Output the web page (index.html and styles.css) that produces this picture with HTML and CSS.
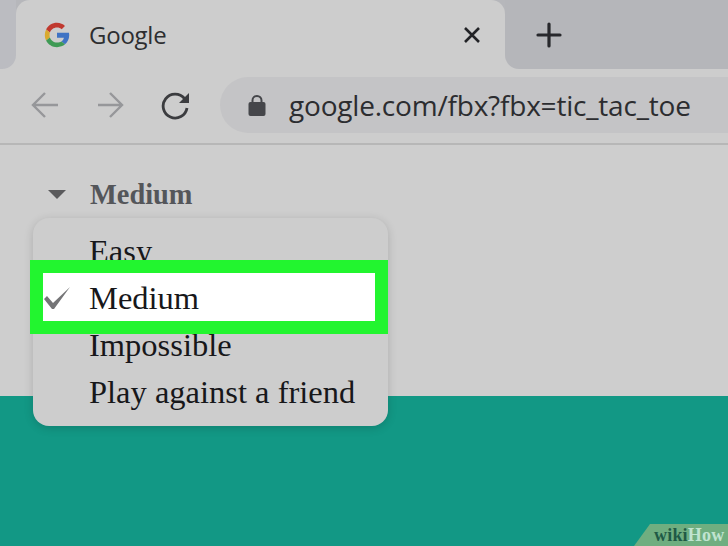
FILE: index.html
```html
<!DOCTYPE html>
<html lang="en">
<head>
<meta charset="utf-8">
<title>Google</title>
<link rel="stylesheet" href="styles.css">
</head>
<body>
<div class="page">
  <header class="chrome">
    <div class="tabstrip">
      <div class="tab-edge"></div>
      <div class="tab">
        <svg class="favicon" viewBox="0 0 48 48" width="26" height="26" aria-hidden="true">
          <path fill="#c0392f" d="M24 10c3.500 0 6.400 1.200 8.700 3.300l6-6C35 3.900 30 1.500 24 1.500 15.200 1.500 7.600 6.500 3.900 13.900l7 5.400C12.600 14 17.800 10 24 10z"/>
          <path fill="#3f73c4" d="M46.500 24.500c0-1.600-.1-3.100-.4-4.500H24v9h12.700c-.6 2.900-2.200 5.300-4.700 7l6.800 5.300c4.800-4.400 7.700-9.900 7.700-16.800z"/>
          <path fill="#d9aa2f" d="M10.900 28.700c-.4-1.400-.7-3-.7-4.700s.3-3.300.7-4.700l-7-5.400C2.400 16.900 1.500 20.300 1.500 24s.9 7.100 2.400 10.100l7-5.400z"/>
          <path fill="#3f9a55" d="M24 46.500c6 0 11.100-2 14.800-5.200L32 36c-2 1.300-4.600 2-8 2-6.200 0-11.400-4-13.100-9.300l-7 5.400C7.600 41.500 15.200 46.500 24 46.500z"/>
        </svg>
        <span class="tab-title">Google</span>
        <svg class="tab-close" viewBox="0 0 18 18" width="18" height="18" aria-hidden="true">
          <path d="M2 2l14 14M16 2L2 16" stroke="#222326" stroke-width="2.600" fill="none"/>
        </svg>
      </div>
      <div class="tab-rest">
        <svg class="new-tab" viewBox="0 0 26 26" width="26" height="26" aria-hidden="true">
          <path d="M2 13h22M13 2v22" stroke="#27282c" stroke-width="3.200" stroke-linecap="round" fill="none"/>
        </svg>
      </div>
    </div>
    <div class="toolbar">
      <svg class="nav-icon" viewBox="0 0 28 28" width="28" height="28" aria-hidden="true">
        <path d="M27 14H3M14 2L2 14l12 12" stroke="#96979a" stroke-width="2.400" fill="none"/>
      </svg>
      <svg class="nav-icon" viewBox="0 0 28 28" width="28" height="28" aria-hidden="true">
        <path d="M2 14h24M14 2l12 12-12 12" stroke="#96979a" stroke-width="2.400" fill="none"/>
      </svg>
      <svg class="nav-icon reload" viewBox="0 0 30 30" width="30" height="30" aria-hidden="true">
        <path d="M23.500 8.500A12 12 0 1 0 26 18" stroke="#3b3c3f" stroke-width="2.800" fill="none"/>
        <path d="M28 3v10H18z" fill="#3b3c3f"/>
      </svg>
      <div class="omnibox">
        <svg class="lock" viewBox="0 0 18 22" width="18" height="22" aria-hidden="true">
          <path d="M4.500 9V6.500a4.500 4.500 0 0 1 9 0V9" stroke="#45464a" stroke-width="2" fill="none"/>
          <rect x="0.500" y="8" width="17" height="14" rx="2" fill="#45464a"/>
        </svg>
        <span class="url">google.com/fbx?fbx=tic_tac_toe</span>
      </div>
    </div>
  </header>
  <main class="content">
    <div class="difficulty">
      <span class="caret"></span>
      <span class="difficulty-label">Medium</span>
    </div>
  </main>
  <div class="board"></div>

  <div class="menu">
    <div class="menu-item">Easy</div>
    <div class="menu-item selected">
      <svg class="check" viewBox="0 0 28 24" width="28" height="24" aria-hidden="true">
        <path d="M1 13l3-3 6 7L27 1 11 23H9z" fill="#757577"/>
      </svg>
      Medium
    </div>
    <div class="menu-item">Impossible</div>
    <div class="menu-item">Play against a friend</div>
  </div>

  <div class="watermark"><span class="wiki">wiki</span><span class="how">How</span></div>
</div>
</body>
</html>
```

FILE: styles.css
```css
* { box-sizing: border-box; }
html, body { margin: 0; padding: 0; }
body { width: 728px; height: 546px; overflow: hidden; font-family: "Open Sans", sans-serif; }

.page { position: relative; width: 728px; height: 546px; display: flex; flex-direction: column; background: #cecece; }

.chrome { flex: none; }

.tabstrip {
  height: 69px;
  display: flex;
  align-items: stretch;
  background: linear-gradient(#b6b7bb 0 50%, #cdcdcd 50% 100%);
}
.tab-edge { width: 16px; background: #bbbcc1; border-radius: 0 0 14px 0; }
.tab {
  width: 489px;
  display: flex;
  align-items: center;
  padding: 0 24px 0 28px;
  background: #cdcdcd;
  border-radius: 14px 14px 0 0;
}
.tab-rest {
  flex: 1;
  display: flex;
  align-items: center;
  padding-left: 31px;
  background: #b5b6ba;
  border-radius: 0 0 0 14px;
}
.favicon { flex: none; margin-top: 1px; }
.tab-title { margin-left: 19px; font-size: 24px; color: #2d2e30; letter-spacing: -0.25px; }
.tab-close { margin-left: auto; }

.toolbar { height: 76px; display: flex; align-items: center; background: #cdcdcd; border-bottom: 2px solid #b7b7b7; padding: 0 0 2px 31px; }
.nav-icon { flex: none; margin-right: 37px; }
.reload { margin: 0; }
.omnibox {
  flex: 1;
  height: 56px;
  margin-left: 29px;
  display: flex;
  align-items: center;
  padding-left: 28px;
  background: #c4c4c6;
  border-radius: 28px 0 0 28px;
}
.lock { flex: none; }
.url { margin-left: 23px; font-size: 28px; color: #2c2d30; letter-spacing: -0.2px; white-space: nowrap; }

.content { height: 251px; padding: 32px 0 0 48px; }
.difficulty { display: flex; align-items: center; }
.caret { width: 0; height: 0; border-left: 9px solid transparent; border-right: 9px solid transparent; border-top: 9px solid #5a5a5c; }
.difficulty-label { margin: 2px 0 0 24px; font-family: "Liberation Serif", serif; font-weight: 700; font-size: 28.400px; line-height: 32px; color: #54565a; }

.board { flex: 1; background: #129885; }

.menu {
  position: absolute;
  left: 33px;
  top: 218px;
  width: 355px;
  height: 208px;
  padding-top: 10px;
  background: #cdcdcd;
  border-radius: 16px;
  box-shadow: 0 2px 10px rgba(0, 0, 0, 0.16);
  font-family: "Liberation Serif", serif;
  font-size: 32.500px;
  color: #17171a;
}
.menu-item { height: 47px; line-height: 47px; padding-left: 56px; white-space: nowrap; }
.menu-item.selected {
  position: relative;
  z-index: 1;
  width: 358px;
  height: 74px;
  line-height: 50px;
  margin: -15px 0 -12px -3px;
  padding-left: 46px;
  background: #fff;
  border: 13px solid #22f52f;
}
.check { position: absolute; left: 0; top: 13px; }

.watermark {
  position: absolute;
  right: 0;
  bottom: 0;
  width: 94px;
  height: 22px;
  padding-left: 20px;
  background: #6fae80;
  clip-path: polygon(16px 0, 100% 0, 100% 100%, 0 100%);
  font-family: "Liberation Serif", serif;
  font-weight: 700;
  font-size: 18px;
  line-height: 22px;
  letter-spacing: 0.2px;
  white-space: nowrap;
}
.wiki { color: #1f5a46; }
.how { color: #c0e4d0; }
```
